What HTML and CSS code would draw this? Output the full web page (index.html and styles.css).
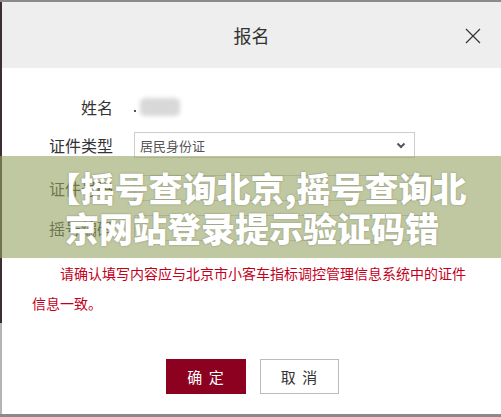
FILE: index.html
```html
<!DOCTYPE html>
<html>

<head>
    <meta charset="UTF-8">
    <title>报名</title>
    <link rel="stylesheet" href="styles.css">
</head>

<body>
    <div id="dialog">
        <div class="dialog-head">
            <h3>报名</h3>
            <span class="close">
                <svg width="16" height="16" viewBox="0 0 16 16">
                    <path d="M1 1L15 15M15 1L1 15" stroke="#333" stroke-width="1.2" fill="none" />
                </svg>
            </span>
        </div>
        <div class="dialog-body">
            <div class="row">
                <label>姓名</label>
                <div class="name-val"><i class="dot"></i><i class="blur"></i></div>
            </div>
            <div class="row">
                <label>证件类型</label>
                <div class="select">
                    <span>居民身份证</span>
                    <svg width="10" height="7" viewBox="0 0 10 7">
                        <path d="M1.5 1.5L5 5L8.5 1.5" stroke="#555" stroke-width="2" fill="none" />
                    </svg>
                </div>
            </div>
            <div class="row row-id">
                <label>证件号码</label>
                <div class="input"></div>
            </div>
            <div class="row row-code">
                <label>摇号编码</label>
                <div class="input"></div>
            </div>
            <p class="tip">请确认填写内容应与北京市小客车指标调控管理信息系统中的证件信息一致。</p>
            <div class="btns">
                <a href="#" class="btn btn-ok">确&nbsp;&nbsp;定</a>
                <a href="#" class="btn btn-cancel">取&nbsp;&nbsp;消</a>
            </div>
        </div>
    </div>
    <div id="banner">
        <div class="line line-1">【摇号查询北京,摇号查询北</div>
        <div class="line line-2">京网站登录提示验证码错</div>
    </div>
</body>

</html>
```

FILE: styles.css
```css
body,
p,
h3 {
    margin: 0;
    padding: 0;
}

a {
    text-decoration: none;
}

body {
    position: relative;
    width: 501px;
    height: 417px;
    overflow: hidden;
    padding: 2px 0 3px 2px;
    box-sizing: border-box;
    background-color: #8a8a8a;
    background-image: linear-gradient(#3d2f2f, #3d2f2f), linear-gradient(#b4b4b4, #b4b4b4);
    background-repeat: no-repeat;
    background-position: 0 2px, 0 323px;
    background-size: 2px 321px, 2px 91px;
    font-family: "Microsoft YaHei", "Noto Sans CJK SC", sans-serif;
    color: #333;
}

#dialog {
    height: 412px;
    background: #fff;
}

.dialog-head {
    position: relative;
    display: flex;
    align-items: center;
    justify-content: center;
    height: 66px;
    background: #eee;
}

.dialog-head h3 {
    font-size: 18px;
    font-weight: normal;
    color: #333;
}

.close {
    position: absolute;
    right: 20px;
    top: 26px;
    width: 16px;
    height: 16px;
    cursor: pointer;
}

.close svg {
    display: block;
}

.dialog-body {
    padding-top: 26px;
}

.row {
    display: flex;
    align-items: center;
    height: 26px;
}

.row + .row {
    margin-top: 12px;
}

.row.row-id {
    margin-top: 17px;
}

.row.row-code {
    margin-top: 14px;
}

.row label {
    width: 111px;
    margin-right: 21px;
    text-align: right;
    font-size: 16px;
    color: #333;
}

.name-val {
    display: flex;
    align-items: center;
    height: 26px;
}

.name-val .dot {
    width: 2px;
    height: 2px;
    margin-top: 8px;
    background: #555;
}

.name-val .blur {
    width: 40px;
    height: 18px;
    margin-left: 4px;
    border-radius: 5px;
    background: #d8d8d8;
    filter: blur(2px);
}

.select {
    display: flex;
    align-items: center;
    justify-content: space-between;
    width: 281px;
    height: 26px;
    padding: 0 8px 0 5px;
    box-sizing: border-box;
    border: 1px solid #ccc;
    font-size: 13px;
    color: #555;
}

.select svg {
    display: block;
}

.input {
    width: 296px;
    height: 24px;
    border: 1px solid #ccc;
}

.tip {
    margin-top: 17px;
    padding: 0 24px 0 30px;
    text-indent: 28px;
    line-height: 30px;
    font-size: 14px;
    color: #c3001c;
}

.btns {
    display: flex;
    justify-content: center;
    gap: 14px;
    margin-top: 41px;
    padding-left: 1px;
}

.btn {
    display: flex;
    align-items: center;
    justify-content: center;
    width: 80px;
    height: 35px;
    box-sizing: border-box;
    font-size: 15px;
}

.btn-ok {
    background: #8c0120;
    color: #fff;
}

.btn-cancel {
    width: 79px;
    border: 1px solid #bbb;
    color: #333;
}

#banner {
    position: absolute;
    left: 0;
    top: 156px;
    width: 501px;
    height: 102px;
    padding-top: 12px;
    box-sizing: border-box;
    background: rgba(150, 163, 100, 0.6);
    font-family: "Noto Sans CJK SC", sans-serif;
    font-size: 34px;
    font-weight: 900;
    line-height: 40px;
    color: #fff;
    text-shadow: 0 0 2px rgba(60, 60, 40, 0.45);
}

#banner .line {
    text-align: center;
    white-space: nowrap;
}

#banner .line-1 {
    padding-left: 12px;
}

#banner .line-2 {
    padding-left: 3px;
}
```
